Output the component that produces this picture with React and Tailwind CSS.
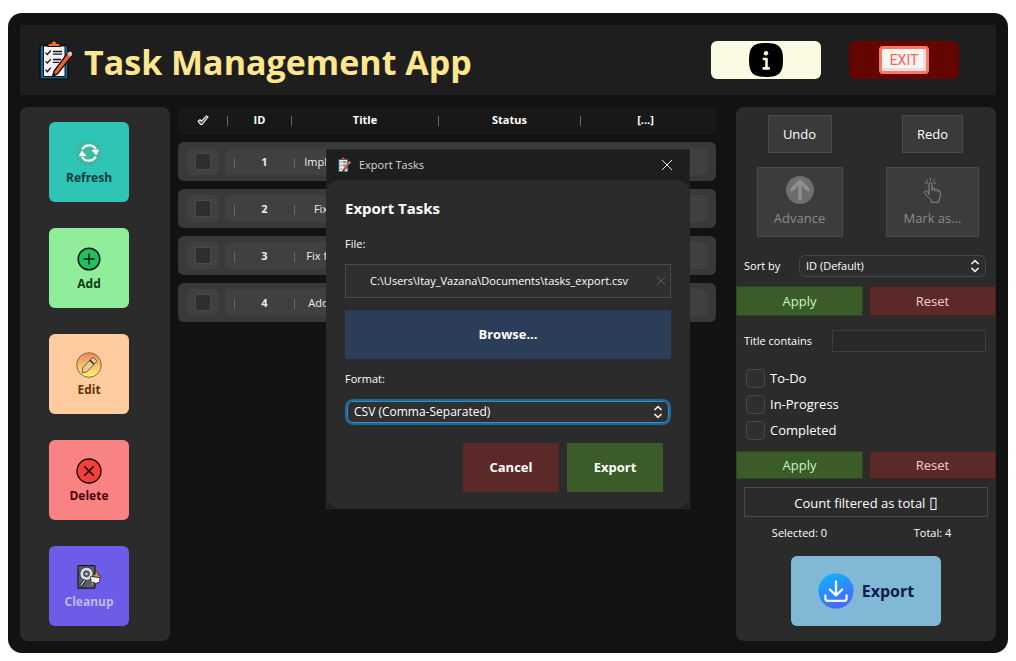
import React from "react";

const tasks = [
  { id: 1, title: "Impl tabs" },
  { id: 2, title: "Fix UI" },
  { id: 3, title: "Fix fonts" },
  { id: 4, title: "Add tag" },
];

function ClipboardIcon({ className }) {
  return (
    <svg viewBox="0 0 34 40" className={className} aria-hidden="true">
      <rect x="1" y="5" width="28" height="34" rx="1.5" fill="#0d6e96" stroke="#0a0f14" strokeWidth="1.6" />
      <path d="M4.5 6h21.5v30.5h-21.5z" fill="#f7f2f3" stroke="#0a0f14" strokeWidth="1" />
      <path d="M9 6.5V4.2q0-1 1-1h2.3Q12.8.8 15 .8t2.7 2.4H20q1 0 1 1v2.3z" fill="#fb6a2c" stroke="#0a0f14" strokeWidth="1.1" />
      <g fill="none" stroke="#11161a" strokeWidth="1.3">
        <path d="M6.6 12.6l1.8 1.9 3.3-4M6.6 21.2l1.8 1.9 3.3-4M6.6 29.8l1.8 1.9 3.3-4" />
        <path d="M14 11.5h9M14 14.2h9M14 19.5h8M14 22.3h6" />
      </g>
      <path d="M13.5 36.5l1.6-5.5L29.3 12.3q1.6-1.4 3.2-.2t.8 3L18.7 33.6z" fill="#f4602a" stroke="#0a0f14" strokeWidth="1.3" strokeLinejoin="round" />
      <path d="M28 14l1.6-2q1.4-1 2.8 0t.8 2.8l-1.6 2z" fill="#f7b9a0" />
      <path d="M13.5 36.5l1.1-3.8 2.6 1.9z" fill="#0a0f14" />
    </svg>
  );
}

function InfoIcon() {
  return (
    <svg viewBox="0 0 34 34" className="size-[34px]" aria-hidden="true">
      <path d="M17 0C30 0 34 4 34 17s-4 17-17 17S0 30 0 17 4 0 17 0z" fill="#000" />
      <circle cx="17" cy="10.3" r="2.2" fill="#fbfbe3" />
      <path d="M14.9 16h2.6v9.4M14.6 25.4h5.2" fill="none" stroke="#fbfbe3" strokeWidth="2.6" strokeLinecap="round" strokeLinejoin="round" />
    </svg>
  );
}

function RefreshIcon() {
  return (
    <svg viewBox="0 0 26 26" className="size-[26px]" aria-hidden="true">
      <circle cx="13" cy="13" r="12.5" fill="#3cb8a4" />
      <g fill="none" stroke="#fff" strokeWidth="2.2">
        <path d="M6.2 9.5A8 8 0 0 1 20 9" />
        <path d="M19.8 16.5A8 8 0 0 1 6 17" />
      </g>
      <path d="M16 10.2h6.6l-2.4 4.6zM10 15.8H3.4l2.4-4.6z" fill="#fff" stroke="#fff" strokeLinejoin="round" />
    </svg>
  );
}

function AddIcon() {
  return (
    <svg viewBox="0 0 26 26" className="size-[26px]" aria-hidden="true">
      <circle cx="13" cy="13" r="10.8" fill="#22c05c" stroke="#0b1a26" strokeWidth="1.6" />
      <path d="M13 8v10M8 13h10" stroke="#0b1a26" strokeWidth="1.5" strokeLinecap="round" />
    </svg>
  );
}

function EditIcon() {
  return (
    <svg viewBox="0 0 26 26" className="size-[26px]" aria-hidden="true">
      <defs>
        <linearGradient id="editFill" x1="0" y1="0" x2="0" y2="1">
          <stop offset="0.1" stopColor="#ef8f5c" />
          <stop offset="1" stopColor="#fbf87a" />
        </linearGradient>
      </defs>
      <circle cx="13" cy="13" r="12.3" fill="url(#editFill)" stroke="#7a5a44" strokeWidth="0.9" />
      <path d="M6 20.8l.8-5 9.4-9.9q.8-.7 1.6 0l2.5 2.4q.7.8 0 1.6l-9.4 9.9z" fill="#e6cf9a" stroke="#6e4d2f" strokeWidth="0.9" strokeLinejoin="round" />
      <path d="M13.8 8.2l4.2 4" stroke="#4a3321" strokeWidth="1.6" />
    </svg>
  );
}

function DeleteIcon() {
  return (
    <svg viewBox="0 0 26 26" className="size-[26px]" aria-hidden="true">
      <circle cx="13" cy="13" r="12" fill="#f5403a" stroke="#150506" strokeWidth="1.3" />
      <path d="M8.7 8.7l8.6 8.6M17.3 8.7l-8.6 8.6" stroke="#150506" strokeWidth="1.6" strokeLinecap="round" />
    </svg>
  );
}

function CleanupIcon() {
  return (
    <svg viewBox="0 0 26 26" className="size-[26px]" aria-hidden="true">
      <rect x="2" y="1.6" width="17" height="22.6" rx="0.8" fill="#56626d" stroke="#14181c" strokeWidth="1.2" />
      <circle cx="10.5" cy="9.8" r="6.6" fill="#d9dde0" stroke="#14181c" strokeWidth="0.7" />
      <circle cx="10.5" cy="9.8" r="3" fill="#5a6570" stroke="#14181c" strokeWidth="0.6" />
      <circle cx="10.5" cy="9.8" r="1.1" fill="#e8eaec" />
      <path d="M4.5 22l4.6-6" stroke="#14181c" strokeWidth="3" />
      <path d="M4.8 21.5l4-5.3" stroke="#cfd4d8" strokeWidth="1.3" />
      <path d="M19.2 7.4l2.8.6.2 3 2.2.5-.6 2.4-6.8-1.2.4-2.4 1.8.2z" fill="#d99058" stroke="#14181c" strokeWidth="0.6" />
      <path d="M14.6 12.4l9.4 1.4-.6 4.8-2.6.2-.6 1.2-2-1.6-3 .2z" fill="#fbf7f2" stroke="#14181c" strokeWidth="0.7" />
      <path d="M15 19.2l2.2-.3-.4 2.6z" fill="#f2a33a" />
    </svg>
  );
}

function AdvanceIcon() {
  return (
    <svg viewBox="0 0 28 28" className="size-7" aria-hidden="true">
      <circle cx="14" cy="14" r="14" fill="#6e6e6e" />
      <path d="M14 23V6M6 13.6L14 5.6l8 8" fill="none" stroke="#8e8e8e" strokeWidth="3.6" strokeLinecap="round" />
    </svg>
  );
}

function TapIcon() {
  return (
    <svg viewBox="0 0 28 28" className="size-7" fill="none" stroke="#8a8a8a" strokeWidth="1" strokeLinecap="round" strokeLinejoin="round" aria-hidden="true">
      <path d="M10 18.5V8.2q0-1.7 1.5-1.7T13 8.2v6.3m0-1.2q0-1.3 1.4-1.3t1.4 1.3V15m0-1q.2-1.1 1.5-1t1.3 1.4v1.4m0-.8q.3-1 1.5-.8t1.2 1.6v4.8l-1.5 3.2v2.4h-7.6v-2.4L8.4 20.4l-2.6-3.2q-.8-1.2.3-2t2.1.2L10 17.6" />
      <path d="M8.3 7H6.4M8.8 5.2L7.4 4M11.5 4.4V2.4M14.2 5.2L15.6 4M14.8 7h1.8" />
    </svg>
  );
}

function DownloadIcon() {
  return (
    <svg viewBox="0 0 36 36" className="size-9" aria-hidden="true">
      <defs>
        <linearGradient id="downloadFill" x1="0.3" y1="0" x2="0.7" y2="1">
          <stop offset="0" stopColor="#0fb0fd" />
          <stop offset="1" stopColor="#4d62fb" />
        </linearGradient>
      </defs>
      <circle cx="18" cy="18" r="17.6" fill="url(#downloadFill)" />
      <g fill="none" stroke="#f4f6ff" strokeWidth="2.3" strokeLinecap="round" strokeLinejoin="round">
        <path d="M18 8.5v13.5M11.8 16.5L18 22.3l6.2-5.8" />
        <path d="M7.4 22.5v3q0 2.3 2.3 2.3h16.6q2.3 0 2.3-2.3v-3" />
      </g>
    </svg>
  );
}

function UpDownIcon({ className }) {
  return (
    <svg viewBox="0 0 10 14" className={`pointer-events-none col-start-1 row-start-1 h-3.5 w-2.5 self-center justify-self-end ${className}`} fill="none" stroke="#eeeeee" strokeWidth="1.7" aria-hidden="true">
      <path d="M1.4 5L5 1.6 8.6 5M1.4 9L5 12.4 8.6 9" />
    </svg>
  );
}

function CrossIcon({ className }) {
  return (
    <svg viewBox="0 0 12 12" className={className} fill="none" stroke="currentColor" aria-hidden="true">
      <path d="M1 1l10 10M11 1L1 11" />
    </svg>
  );
}

function CheckMark() {
  return (
    <svg viewBox="0 0 12 11" className="mx-auto h-[11px] w-3" aria-hidden="true">
      <path d="M1 6.2l2-1.6 1.5 1.6L9.4.9l1.7 1-6 7.6H3.6z" fill="#555" stroke="#f2f2f2" strokeWidth="1.1" strokeLinejoin="round" />
    </svg>
  );
}

function SideButton({ icon, label, className }) {
  return (
    <button type="button" className={`flex size-20 flex-col items-center justify-center gap-0.5 rounded-md pt-1 text-xs font-bold ${className}`}>
      {icon}
      <span className="leading-5">{label}</span>
    </button>
  );
}

function Bar() {
  return <span className="h-2.5 w-px bg-[#5b6f68]" />;
}

function ApplyReset({ className }) {
  return (
    <div className={`grid grid-cols-2 gap-1.5 text-[13px] ${className}`}>
      <button type="button" className="border border-[#2c461c] bg-[#3b5b29] pt-0.5 text-[#c9f7c0]">Apply</button>
      <button type="button" className="border border-[#4a1f1f] bg-[#5c2929] pt-0.5 text-[#f5cccc]">Reset</button>
    </div>
  );
}

function Header() {
  return (
    <header className="flex h-[70px] items-center bg-[#1e1e1e] pr-[37px] pl-[19px]">
      <ClipboardIcon className="h-10 w-[34px]" />
      <h1 className="ml-[11px] flex-1 pt-1 text-[34px] leading-10 font-bold text-[#ffe68f]">Task Management App</h1>
      <div className="flex gap-7">
        <button type="button" aria-label="Info" className="flex h-[38px] w-[110px] items-center justify-center rounded-md bg-[#fbfbe3]">
          <InfoIcon />
        </button>
        <button type="button" className="flex h-[38px] w-[110px] items-center justify-center rounded-md bg-[#640500]">
          <span className="flex h-7 w-[50px] items-center justify-center rounded border-3 border-[#ff7661] bg-[#f8f6f5] font-[Roboto,sans-serif] text-sm text-[#ff5f4a] shadow-[inset_-3px_-3px_0_#e6e0df]">EXIT</span>
        </button>
      </div>
    </header>
  );
}

function TaskTable() {
  return (
    <table className="block min-w-0 flex-1 text-[11px] text-white">
      <thead className="block">
        <tr className="grid h-[27px] grid-cols-[49px_1px_63px_1px_146px_1px_141px_1px_1fr] items-center rounded-md bg-[#181818] pr-1.5 font-bold">
          <th scope="col" aria-label="Selected"><CheckMark /></th>
          <td className="h-2.5 bg-[#5b6f68]" />
          <th scope="col">ID</th>
          <td className="h-2.5 bg-[#7b5a62]" />
          <th scope="col">Title</th>
          <td className="h-2.5 bg-[#5b6f68]" />
          <th scope="col">Status</th>
          <td className="h-2.5 bg-[#5b6f68]" />
          <th scope="col">[...]</th>
        </tr>
      </thead>
      <tbody className="block">
        {tasks.map((t) => (
          <tr key={t.id} className="mt-2 flex h-[39px] items-center gap-1.5 rounded-md bg-[#393939] px-2">
            <td className="flex h-[27px] w-[33px] items-center justify-center rounded-md bg-[#404040]">
              <input type="checkbox" aria-label={`Select task ${t.id}`} className="h-[17px] w-4 appearance-none border border-[#4a4a4a] bg-[#2e2e2e]" />
            </td>
            <td className="flex h-[27px] flex-1 items-center rounded-md bg-[#404040] pt-0.5 pl-[9px]">
              <Bar />
              <span className="w-[59px] text-center text-[11px] font-bold text-[#eeeeee]">{t.id}</span>
              <Bar />
              <span className="w-[66px] text-center text-[11px] whitespace-nowrap text-[#eeeeee]">{t.title}</span>
            </td>
          </tr>
        ))}
      </tbody>
    </table>
  );
}

function Controls() {
  return (
    <aside className="w-[260px] rounded-lg bg-[#2b2b2b] pt-2 pb-[15px] text-xs text-white">
      <div className="grid grid-cols-2 justify-items-center gap-x-1.5 gap-y-3.5 text-[13px]">
        <button type="button" className="h-[38px] w-16 border border-[#4a4a4a] bg-[#3a3a3a] pt-0.5">Undo</button>
        <button type="button" className="h-[38px] w-[61px] border border-[#4a4a4a] bg-[#3a3a3a] pt-0.5">Redo</button>
        <button type="button" disabled className="flex h-[70px] w-[86px] flex-col items-center gap-1.5 border border-[#4a4a4a] bg-[#3c3c3c] pt-2 text-[#8a8a8a]">
          <AdvanceIcon />
          Advance
        </button>
        <button type="button" disabled className="flex h-[70px] w-[93px] flex-col items-center gap-1.5 border border-[#4a4a4a] bg-[#3c3c3c] pt-2 text-[#8a8a8a]">
          <TapIcon />
          Mark as...
        </button>
      </div>

      <div className="mt-[18px] flex items-center justify-between pr-2.5 pl-2">
        <label htmlFor="sort" className="text-[11px]">Sort by</label>
        <div className="grid w-[187px]">
          <select id="sort" className="col-start-1 row-start-1 h-[22px] appearance-none rounded-md border border-[#454545] bg-[#2d2d2d] px-1.5 text-[11px]">
            <option>ID (Default)</option>
          </select>
          <UpDownIcon className="mr-1.5" />
        </div>
      </div>
      <ApplyReset className="mt-[9px] h-[30px]" />

      <div className="mt-3.5 flex items-center justify-between pr-2.5 pl-2">
        <label htmlFor="title-filter" className="text-[11px]">Title contains</label>
        <input id="title-filter" type="text" className="h-[22px] w-[154px] border border-[#3e3e3e] bg-[#282828] px-1" />
      </div>

      <div className="mt-[17px] flex flex-col gap-[7px] pl-2.5 text-[13px]">
        {["To-Do", "In-Progress", "Completed"].map((s) => (
          <label key={s} className="flex items-center gap-[5px] leading-[19px]">
            <input type="checkbox" className="size-[19px] appearance-none rounded-sm border border-[#474747] bg-[#2f2f2f]" />
            {s}
          </label>
        ))}
      </div>
      <ApplyReset className="mt-[11px] h-7" />

      <div className="px-2 pt-2">
        <button type="button" className="h-[30px] w-full border border-[#4a4a4a] pt-0.5 text-[13px]">Count filtered as total <span className="text-base leading-4">▯</span></button>
      </div>
      <div className="mt-2 grid grid-cols-2 gap-x-1.5 text-center text-[11px] leading-4">
        <span>Selected: 0</span>
        <span>Total: 4</span>
      </div>
      <button type="button" className="mx-auto mt-[15px] flex h-[70px] w-[150px] items-center justify-center gap-2 rounded-md bg-[#80b8d6] text-base font-bold text-[#0e1a4d]">
        <DownloadIcon />
        Export
      </button>
    </aside>
  );
}

function ExportDialog() {
  return (
    <div className="absolute inset-0 flex items-center justify-center pb-1">
      <section role="dialog" aria-modal="true" aria-labelledby="dialog-title" className="w-[364px] border border-[#292929] bg-[#1e1e1e] text-white">
        <div className="flex h-[30px] items-center pr-4 pl-2.5">
          <ClipboardIcon className="h-4 w-3.5" />
          <span className="ml-2 flex-1 pt-0.5 text-[11px] text-[#d8d8d8]">Export Tasks</span>
          <button type="button" aria-label="Close" className="text-[#e6e6e6]"><CrossIcon className="size-3" /></button>
        </div>
        <form className="flex flex-col rounded-xl bg-[#2b2b2b] px-[18px] pt-4 pb-4" onSubmit={(e) => e.preventDefault()}>
          <h2 id="dialog-title" className="text-[15px] leading-6 font-bold">Export Tasks</h2>
          <label htmlFor="file" className="mt-4 text-[11px] leading-4">File:</label>
          <div className="mt-3 flex h-[34px] items-center border border-[#4a4a4a] bg-[#2f2f2f]">
            <input id="file" type="text" defaultValue="C:\Users\Itay_Vazana\Documents\tasks_export.csv" className="min-w-0 flex-1 bg-transparent pt-0.5 text-center text-[11px] outline-none" />
            <button type="button" aria-label="Clear" className="px-1 text-[#6a6a6a]"><CrossIcon className="size-2.5" /></button>
          </div>
          <button type="button" className="mt-3 h-[49px] bg-[#2b3d59] pt-0.5 text-[13px] font-bold">Browse...</button>
          <label htmlFor="format" className="mt-3 text-[11px] leading-4">Format:</label>
          <div className="mt-3 grid">
            <select id="format" className="col-start-1 row-start-1 h-[26px] appearance-none rounded-lg border-2 border-[#1f6799] bg-[#2f2f2f] px-[7px] text-xs inset-ring inset-ring-[#2f8fd0]">
              <option>CSV (Comma-Separated)</option>
            </select>
            <UpDownIcon className="mr-2" />
          </div>
          <div className="mt-[18px] flex justify-end gap-2 pr-2 text-[13px] font-bold">
            <button type="button" className="h-[49px] w-24 bg-[#5c2929] pt-0.5">Cancel</button>
            <button type="submit" className="h-[49px] w-24 bg-[#3b5b29] pt-0.5">Export</button>
          </div>
        </form>
      </section>
    </div>
  );
}

export default function App() {
  return (
    <div className="relative min-h-screen bg-white px-2 pt-[13px] pb-2 font-['Open_Sans','Noto_Sans',sans-serif]">
      <div className="flex flex-col gap-3 rounded-[14px] bg-[#121212] p-3">
        <Header />
        <main className="flex">
          <nav className="mr-2 flex w-[150px] flex-col gap-[26px] rounded-lg bg-[#2b2b2b] py-[15px] pl-[29px]">
            <SideButton icon={<RefreshIcon />} label="Refresh" className="bg-[#2ec4b6] text-[#0b3d3a]" />
            <SideButton icon={<AddIcon />} label="Add" className="bg-[#90ee9a] text-[#0b3a0b]" />
            <SideButton icon={<EditIcon />} label="Edit" className="bg-[#ffcc9f] text-[#6b3000]" />
            <SideButton icon={<DeleteIcon />} label="Delete" className="bg-[#f98282] text-[#4c0006]" />
            <SideButton icon={<CleanupIcon />} label="Cleanup" className="bg-[#6c5ce7] text-[#c3b8f6]" />
          </nav>
          <TaskTable />
          <div className="w-5" />
          <Controls />
        </main>
      </div>
      <ExportDialog />
    </div>
  );
}
